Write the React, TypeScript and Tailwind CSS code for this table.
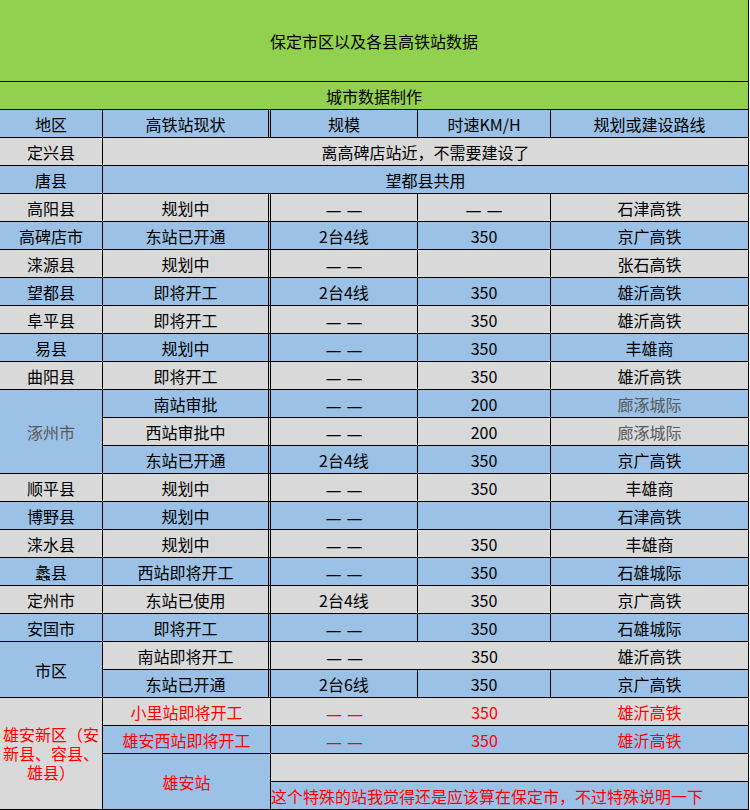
import React from "react";

// Colours taken from the sheet.
const GRAY = "bg-[#D9D9D9]";
const BLUE = "bg-[#9BC2E6]";
const GREEN = "bg-[#92D050]";

// Right-border variants.
const R1 = "border-r";
const R2 = "border-r-[3px] border-double";

type CellProps = {
  children?: React.ReactNode;
  className?: string;
  wrap?: boolean;
};

// One grid cell with the bottom rule.
function Cell(props: CellProps): React.ReactNode {
  const ws = props.wrap ? "whitespace-normal" : "whitespace-nowrap";
  return (
    <div className={`flex items-center justify-center border-b border-black text-center ${ws} ${props.className ?? ""}`}>
      {props.children}
    </div>
  );
}

// Two-dash placeholder, rendered as in the sheet.
function Dash(): React.ReactNode {
  return (
    <span className="inline-flex gap-[5px] text-[18px] pt-[2px]">
      <span>—</span>
      <span>—</span>
    </span>
  );
}

type RowData = {
  bg: string;
  region?: string;
  cells: [string, string, string, string];
  lineColor?: string;
  inner?: boolean;
  color?: string;
  single?: boolean;
};

function val(v: string): React.ReactNode {
  return v === "-" ? <Dash /> : v;
}

// Standard row: optional region cell plus four data cells.
function Row({ row }: { row: RowData }): React.ReactNode {
  const inner = row.inner === false ? "" : R1;
  const c = row.color ?? "";
  return (
    <>
      {row.region !== undefined && <Cell className={`${row.bg} ${R1} ${c}`}>{row.region}</Cell>}
      <Cell className={`${row.bg} ${row.single ? R1 : R2} ${c}`}>{val(row.cells[0])}</Cell>
      <Cell className={`${row.bg} ${inner} ${c}`}>{val(row.cells[1])}</Cell>
      <Cell className={`${row.bg} ${inner} ${c}`}>{val(row.cells[2])}</Cell>
      <Cell className={`${row.bg} ${R1} ${row.lineColor ?? c}`}>{val(row.cells[3])}</Cell>
    </>
  );
}

const topRows: RowData[] = [
  { bg: GRAY, region: "高阳县", cells: ["规划中", "-", "-", "石津高铁"] },
  { bg: BLUE, region: "高碑店市", cells: ["东站已开通", "2台4线", "350", "京广高铁"] },
  { bg: GRAY, region: "涞源县", cells: ["规划中", "-", "", "张石高铁"] },
  { bg: BLUE, region: "望都县", cells: ["即将开工", "2台4线", "350", "雄沂高铁"] },
  { bg: GRAY, region: "阜平县", cells: ["即将开工", "-", "350", "雄沂高铁"] },
  { bg: BLUE, region: "易县", cells: ["规划中", "-", "350", "丰雄商"] },
  { bg: GRAY, region: "曲阳县", cells: ["即将开工", "-", "350", "雄沂高铁"] },
];

const zhuozhou: RowData[] = [
  { bg: BLUE, cells: ["南站审批", "-", "200", "廊涿城际"], lineColor: "text-[#595959]" },
  { bg: GRAY, cells: ["西站审批中", "-", "200", "廊涿城际"], lineColor: "text-[#595959]" },
  { bg: BLUE, cells: ["东站已开通", "2台4线", "350", "京广高铁"] },
];

const midRows: RowData[] = [
  { bg: GRAY, region: "顺平县", cells: ["规划中", "-", "350", "丰雄商"] },
  { bg: BLUE, region: "博野县", cells: ["规划中", "-", "", "石津高铁"] },
  { bg: GRAY, region: "涞水县", cells: ["规划中", "-", "350", "丰雄商"] },
  { bg: BLUE, region: "蠡县", cells: ["西站即将开工", "-", "350", "石雄城际"] },
  { bg: GRAY, region: "定州市", cells: ["东站已使用", "2台4线", "350", "京广高铁"] },
  { bg: BLUE, region: "安国市", cells: ["即将开工", "-", "350", "石雄城际"] },
];

const shiqu: RowData[] = [
  { bg: GRAY, cells: ["南站即将开工", "-", "350", "雄沂高铁"], inner: false },
  { bg: BLUE, cells: ["东站已开通", "2台6线", "350", "京广高铁"] },
];

const xiongan: RowData[] = [
  { bg: GRAY, cells: ["小里站即将开工", "-", "350", "雄沂高铁"], inner: false, color: "text-[#FF0000]", single: true },
  { bg: BLUE, cells: ["雄安西站即将开工", "-", "350", "雄沂高铁"], inner: false, color: "text-[#FF0000]", single: true },
];

export default function App(): React.ReactNode {
  return (
    <div className="w-[750px] h-[810px] bg-white overflow-hidden text-[16px] leading-none text-black font-['Noto_Sans_CJK_SC',sans-serif]">
      <div className="grid grid-cols-[103px_168px_147px_133px_198px] grid-rows-[82px] auto-rows-[28px]">
        {/* Title */}
        <Cell className={`col-span-5 ${GREEN} ${R1}`}>保定市区以及各县高铁站数据</Cell>
        <Cell className={`col-span-5 ${GREEN} ${R1}`}>城市数据制作</Cell>

        {/* Header */}
        <Cell className={`${BLUE} ${R1}`}>地区</Cell>
        <Cell className={`${BLUE} ${R2}`}>高铁站现状</Cell>
        <Cell className={`${BLUE} ${R1}`}>规模</Cell>
        <Cell className={`${BLUE} ${R1}`}>时速KM/H</Cell>
        <Cell className={`${BLUE} ${R1}`}>规划或建设路线</Cell>

        {/* Merged rows */}
        <Cell className={`${GRAY} ${R1}`}>定兴县</Cell>
        <Cell className={`col-span-4 ${GRAY} ${R1}`}>离高碑店站近，不需要建设了</Cell>
        <Cell className={`${BLUE} ${R1}`}>唐县</Cell>
        <Cell className={`col-span-4 ${BLUE} ${R1}`}>望都县共用</Cell>

        {topRows.map((r, i) => <Row row={r} key={`t${i}`} />)}

        <Cell className={`row-span-3 ${BLUE} ${R1} text-[#595959]`}>涿州市</Cell>
        {zhuozhou.map((r, i) => <Row row={r} key={`z${i}`} />)}

        {midRows.map((r, i) => <Row row={r} key={`m${i}`} />)}

        <Cell className={`row-span-2 ${BLUE} ${R1}`}>市区</Cell>
        {shiqu.map((r, i) => <Row row={r} key={`s${i}`} />)}

        <Cell wrap className={`row-span-4 ${GRAY} ${R1} text-[#FF0000] leading-[19px] px-[2px]`}>
          雄安新区（安新县、容县、雄县）
        </Cell>
        {xiongan.map((r, i) => <Row row={r} key={`x${i}`} />)}
        <Cell className={`row-span-2 ${BLUE} ${R1} text-[#FF0000]`}>雄安站</Cell>
        <Cell className={`col-span-3 ${GRAY} ${R1}`} />
        <Cell className={`col-span-3 ${BLUE} ${R1} text-[#FF0000] justify-start!`}>
          这个特殊的站我觉得还是应该算在保定市，不过特殊说明一下
        </Cell>
      </div>
    </div>
  );
}
